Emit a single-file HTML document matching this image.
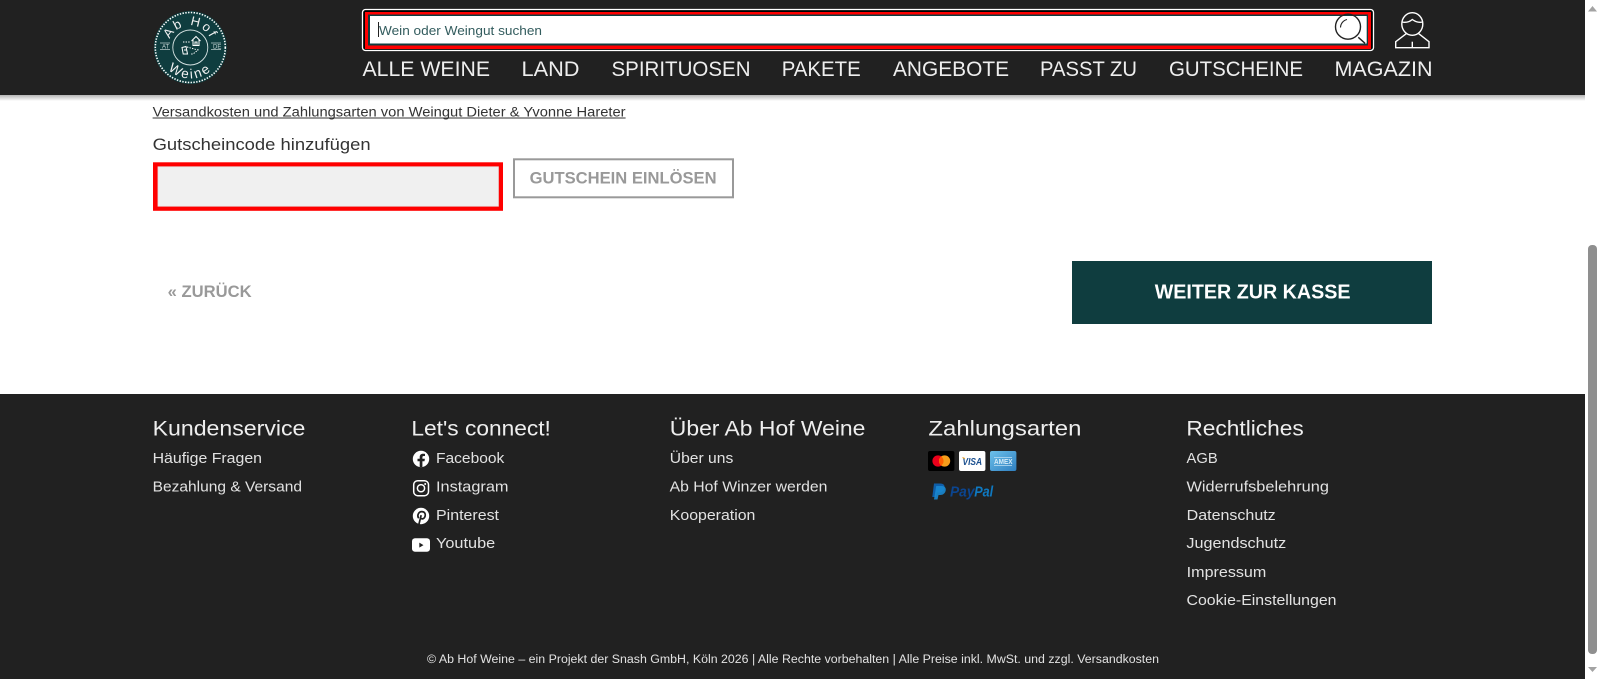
<!DOCTYPE html>
<html lang="de">
<head>
<meta charset="utf-8">
<title>Ab Hof Weine</title>
<style>
html,body{margin:0;padding:0;width:1600px;height:679px;overflow:hidden;background:#fff}
svg{display:block}
text{font-family:"Liberation Sans",sans-serif}
.nav{font-size:21px;fill:#eeeeee}
.h{font-size:21px;fill:#eeeeee}
.l{font-size:15px;fill:#e2e2e2}
</style>
</head>
<body>
<svg width="1600" height="679" viewBox="0 0 1600 679" xmlns="http://www.w3.org/2000/svg">
<defs>
<linearGradient id="sh" x1="0" y1="0" x2="0" y2="1"><stop offset="0" stop-color="#b4b4b4"/><stop offset="1" stop-color="#fff"/></linearGradient>
<linearGradient id="am" x1="0" y1="0" x2="1" y2="1"><stop offset="0" stop-color="#6cc0ea"/><stop offset="1" stop-color="#2f7fc0"/></linearGradient>
<path id="arcTop" d="M168.3 47.5A22 22 0 0 1 212.3 47.5" fill="none"/>
<path id="arcBot" d="M159.3 47.5A31 31 0 0 0 221.3 47.5" fill="none"/>
</defs>

<rect width="1600" height="679" fill="#fff"/>

<!-- header -->
<rect x="0" y="95" width="1585" height="6" fill="url(#sh)"/>
<rect x="0" y="0" width="1585" height="95" fill="#212121"/>

<!-- logo -->
<circle cx="190.3" cy="47.5" r="36.5" fill="#0f3d3f"/>
<circle cx="190.3" cy="47.5" r="35" fill="none" stroke="#fff" stroke-width="1.6" stroke-dasharray="1.4 1.4"/>
<circle cx="190.3" cy="47.5" r="17.5" fill="none" stroke="#d8e4e4" stroke-width=".9"/>
<text font-size="13" fill="#f2f2f2" text-anchor="middle" letter-spacing="2"><textPath href="#arcTop" startOffset="50%">Ab Hof</textPath></text>
<text font-size="13.5" fill="#f2f2f2" text-anchor="middle" letter-spacing="2.2"><textPath href="#arcBot" startOffset="50%">Weine</textPath></text>
<g stroke="#b9caca" stroke-width=".8" fill="none">
<path d="M160 43H170M160 49.5H170M211 43H221M211 49.5H221"/>
</g>
<text x="162" y="48.4" font-size="6" fill="#c5d3d3">AT</text>
<text x="213" y="48.4" font-size="6" fill="#c5d3d3">DE</text>
<g stroke="#fff" fill="none" stroke-width="1">
<path d="M191.5 41L196 36.5L200.5 41M193 40V45.5H199V40"/>
<rect x="195" y="42" width="2" height="3.5"/>
<path d="M182 47.5L186 46.5L187.5 54H183.2ZM184 50H187"/>
<path d="M183 42H190M187 47L198 50L193 54H190" stroke-dasharray="1.4 1.2"/>
</g>

<!-- search -->
<rect x="362.5" y="9.5" width="1011" height="41" rx="3" fill="#000" stroke="#fff" stroke-width="1.3"/>
<rect x="365" y="12" width="1006" height="37" fill="#f00"/>
<rect x="368" y="14.5" width="1000" height="31" fill="#0f3d3f"/>
<rect x="370" y="16" width="996.7" height="27.5" fill="#fff"/>
<path d="M378.5 22V37" stroke="#222" stroke-width="1"/>
<text x="379" y="35" font-size="13" fill="#335c5e" textLength="163" lengthAdjust="spacingAndGlyphs">Wein oder Weingut suchen</text>
<g fill="none" stroke="#222" stroke-width="1.4">
<circle cx="1348" cy="26.7" r="12.5"/>
<path d="M1358.3 37.3L1365 43.3"/>
<path d="M1340.5 27.5A8.5 8.5 0 0 1 1347 19.5" stroke-width="1.1"/>
</g>
<!-- user -->
<g fill="none" stroke="#fff" stroke-width="1.4">
<ellipse cx="1412.3" cy="24" rx="10.5" ry="11.3"/>
<path d="M1402 22C1407 23 1410 21.5 1412.3 19.5C1415 21.5 1418 23 1422.6 22"/>
<path d="M1406.7 33.3L1395.7 41.7V47.7H1429V41.7L1418.3 33.3"/>
<path d="M1412.3 41.7V47.7"/>
</g>

<!-- nav -->
<text class="nav" x="362.5" y="76" textLength="127.5" lengthAdjust="spacingAndGlyphs">ALLE WEINE</text>
<text class="nav" x="521.5" y="76" textLength="58" lengthAdjust="spacingAndGlyphs">LAND</text>
<text class="nav" x="611.5" y="76" textLength="139" lengthAdjust="spacingAndGlyphs">SPIRITUOSEN</text>
<text class="nav" x="781.7" y="76" textLength="79" lengthAdjust="spacingAndGlyphs">PAKETE</text>
<text class="nav" x="893" y="76" textLength="116" lengthAdjust="spacingAndGlyphs">ANGEBOTE</text>
<text class="nav" x="1040" y="76" textLength="97" lengthAdjust="spacingAndGlyphs">PASST ZU</text>
<text class="nav" x="1169" y="76" textLength="134" lengthAdjust="spacingAndGlyphs">GUTSCHEINE</text>
<text class="nav" x="1334.5" y="76" textLength="98" lengthAdjust="spacingAndGlyphs">MAGAZIN</text>

<!-- content -->
<text x="152.6" y="116.6" font-size="13.5" fill="#333" textLength="473" lengthAdjust="spacingAndGlyphs">Versandkosten und Zahlungsarten von Weingut Dieter &amp; Yvonne Hareter</text>
<path d="M152.6 118H625.6" stroke="#333" stroke-width="1"/>
<text x="152.6" y="150" font-size="17" fill="#333" textLength="218" lengthAdjust="spacingAndGlyphs">Gutscheincode hinzufügen</text>

<rect x="153" y="162.3" width="350" height="48.5" fill="#f00"/>
<rect x="158" y="166.8" width="340.4" height="39.4" fill="#f0f0f0" stroke="#e4e4e4" stroke-width=".8"/>

<rect x="514" y="159.3" width="219" height="38" fill="#fff" stroke="#999" stroke-width="2"/>
<text x="529.6" y="183.3" font-size="17" font-weight="700" fill="#999" textLength="187" lengthAdjust="spacingAndGlyphs">GUTSCHEIN EINLÖSEN</text>

<text x="167.6" y="297" font-size="17" font-weight="700" fill="#999" textLength="84" lengthAdjust="spacingAndGlyphs">« ZURÜCK</text>

<rect x="1072" y="261" width="360" height="63" fill="#0f3d3f"/>
<text x="1154.7" y="298.7" font-size="20" font-weight="700" fill="#fff" textLength="195.8" lengthAdjust="spacingAndGlyphs">WEITER ZUR KASSE</text>

<!-- footer -->
<rect x="0" y="394" width="1585" height="285" fill="#212121"/>

<text class="h" x="152.6" y="435.4" textLength="152.8" lengthAdjust="spacingAndGlyphs">Kundenservice</text>
<text class="h" x="411.4" y="435.4" textLength="139.5" lengthAdjust="spacingAndGlyphs">Let's connect!</text>
<text class="h" x="669.8" y="435.4" textLength="195.6" lengthAdjust="spacingAndGlyphs">Über Ab Hof Weine</text>
<text class="h" x="928.4" y="435.4" textLength="153" lengthAdjust="spacingAndGlyphs">Zahlungsarten</text>
<text class="h" x="1186.4" y="435.4" textLength="117.4" lengthAdjust="spacingAndGlyphs">Rechtliches</text>

<text class="l" x="152.6" y="463" textLength="109.4" lengthAdjust="spacingAndGlyphs">Häufige Fragen</text>
<text class="l" x="152.6" y="491.3" textLength="149.4" lengthAdjust="spacingAndGlyphs">Bezahlung &amp; Versand</text>

<text class="l" x="436" y="463" textLength="68.3" lengthAdjust="spacingAndGlyphs">Facebook</text>
<text class="l" x="436" y="491.3" textLength="72.5" lengthAdjust="spacingAndGlyphs">Instagram</text>
<text class="l" x="436" y="520" textLength="63" lengthAdjust="spacingAndGlyphs">Pinterest</text>
<text class="l" x="436" y="548" textLength="59.2" lengthAdjust="spacingAndGlyphs">Youtube</text>

<text class="l" x="669.8" y="463" textLength="63.5" lengthAdjust="spacingAndGlyphs">Über uns</text>
<text class="l" x="669.6" y="491.3" textLength="157.8" lengthAdjust="spacingAndGlyphs">Ab Hof Winzer werden</text>
<text class="l" x="669.8" y="520" textLength="85.6" lengthAdjust="spacingAndGlyphs">Kooperation</text>

<text class="l" x="1186.5" y="463" textLength="31.2" lengthAdjust="spacingAndGlyphs">AGB</text>
<text class="l" x="1186.5" y="491.3" textLength="142.4" lengthAdjust="spacingAndGlyphs">Widerrufsbelehrung</text>
<text class="l" x="1186.7" y="520" textLength="89" lengthAdjust="spacingAndGlyphs">Datenschutz</text>
<text class="l" x="1186.4" y="548" textLength="99.8" lengthAdjust="spacingAndGlyphs">Jugendschutz</text>
<text class="l" x="1186.7" y="577" textLength="79.6" lengthAdjust="spacingAndGlyphs">Impressum</text>
<text class="l" x="1186.5" y="605" textLength="150" lengthAdjust="spacingAndGlyphs">Cookie-Einstellungen</text>

<text x="427" y="663.2" font-size="11.5" fill="#e2e2e2" textLength="732" lengthAdjust="spacingAndGlyphs">© Ab Hof Weine – ein Projekt der Snash GmbH, Köln 2026 | Alle Rechte vorbehalten | Alle Preise inkl. MwSt. und zzgl. Versandkosten</text>

<!-- social icons -->
<circle cx="421" cy="459" r="8.2" fill="#fff"/>
<path d="M422.4 467.2V461.2H424.5L424.9 458.8H422.4V457.3C422.4 456.5 422.8 456 423.8 456H425V453.9C424.4 453.8 423.7 453.7 423 453.7C420.9 453.7 419.7 455 419.7 457V458.8H417.5V461.2H419.7V467.2Z" fill="#212121"/>

<rect x="413.7" y="480.7" width="14.8" height="15" rx="4" fill="none" stroke="#fff" stroke-width="1.5"/>
<circle cx="421" cy="488.2" r="3.6" fill="none" stroke="#fff" stroke-width="1.5"/>
<circle cx="425.2" cy="484" r="1" fill="#fff"/>

<circle cx="421" cy="516" r="8.2" fill="#fff"/>
<path d="M419 524C419.6 521.5 420.2 519 421 515.8M418.3 517.6C417 515 418.8 511.6 421.8 511.6C424.5 511.6 425.6 513.6 425.2 515.8C424.8 518 423.2 519.2 421.8 518.8C421 518.6 420.6 518.2 420.4 517.6" fill="none" stroke="#212121" stroke-width="1.7" stroke-linecap="round"/>

<rect x="412" y="538.3" width="18" height="13.5" rx="3" fill="#fff"/>
<path d="M419.3 542.6V547.6L423.5 545.1Z" fill="#212121"/>

<!-- payment -->
<rect x="928" y="451" width="26.4" height="20" rx="2" fill="#000"/>
<circle cx="938" cy="461" r="5.6" fill="#eb001b"/>
<circle cx="944.6" cy="461" r="5.6" fill="#f79e1b"/>
<path d="M941.3 456.5A5.6 5.6 0 0 1 941.3 465.5A5.6 5.6 0 0 1 941.3 456.5Z" fill="#ff5f00"/>
<rect x="959" y="451" width="26.4" height="20" rx="2" fill="#fff"/>
<text x="962.5" y="465" font-size="10" font-weight="700" font-style="italic" fill="#1a4f8f" textLength="19.5" lengthAdjust="spacingAndGlyphs">VISA</text>
<path d="M962.5 457.5L965 458.6" stroke="#f7a823" stroke-width="1"/>
<rect x="990" y="451" width="26.4" height="20" rx="2" fill="url(#am)"/>
<text x="994" y="464" font-size="7" font-weight="700" fill="#d7ecf8" textLength="18.5" lengthAdjust="spacingAndGlyphs">AMEX</text>
<path d="M994 457.5H1012M994 465.5H1012" stroke="#bfe0f3" stroke-width=".7"/>

<path d="M934 483.5H940.5C943.5 483.5 945 485.3 944.5 488C944 491 941.6 492.5 939 492.5H937L936 497H932.3Z" fill="#0f5ea8"/>
<path d="M936.2 486H941.8C944.8 486 946.2 488 945.7 490.5C945.2 493.3 943 495 940.2 495H938.5L937.5 499.5H934Z" fill="#1a88d0" opacity=".9"/>
<text x="950" y="496.6" font-size="15" font-weight="700" font-style="italic" fill="#0b4590" textLength="24.5" lengthAdjust="spacingAndGlyphs">Pay</text>
<text x="974.2" y="496.6" font-size="15" font-weight="700" font-style="italic" fill="#0f79c1" textLength="19" lengthAdjust="spacingAndGlyphs">Pal</text>

<!-- scrollbar -->
<rect x="1585" y="0" width="15" height="679" fill="#fff"/>
<rect x="1588" y="245" width="9" height="409" rx="4" fill="#8f8f8f"/>
<path d="M1592.5 6L1588 11.5H1597Z" fill="#a3a3a3"/>
<path d="M1592.5 672L1588 667H1597Z" fill="#a3a3a3"/>
</svg>
</body>
</html>
